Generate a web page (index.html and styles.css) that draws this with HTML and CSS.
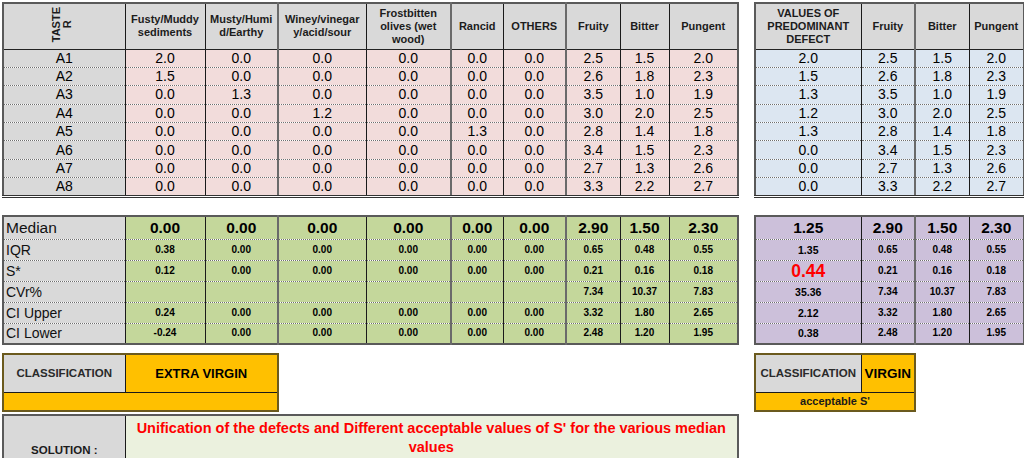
FILE: index.html
```html
<!DOCTYPE html>
<html>
<head>
<meta charset="utf-8">
<link rel="stylesheet" href="styles.css">
</head>
<body>
<div class="sheet">
  <div class="band band-top">
    <table class="tbl main">
      <colgroup>
        <col class="w122"><col class="w80"><col class="w73"><col class="w88"><col class="w85"><col class="w52"><col class="w63"><col class="w54"><col class="w49"><col class="w69">
      </colgroup>
      <thead>
        <tr class="hdr">
          <th class="taster"><span class="vert">TASTE<br>R</span></th>
          <th>Fusty/Muddy<br>sediments</th>
          <th>Musty/Humi<br>d/Earthy</th>
          <th class="thick">Winey/vinegar<br>y/acid/sour</th>
          <th>Frostbitten<br>olives (wet<br>wood)</th>
          <th class="thick">Rancid</th>
          <th>OTHERS</th>
          <th class="thick">Fruity</th>
          <th>Bitter</th>
          <th>Pungent</th>
        </tr>
      </thead>
      <tbody class="pink">
        <tr><td class="name">A1</td><td>2.0</td><td>0.0</td><td class="thick">0.0</td><td>0.0</td><td class="thick">0.0</td><td>0.0</td><td class="thick">2.5</td><td>1.5</td><td>2.0</td></tr>
        <tr><td class="name">A2</td><td>1.5</td><td>0.0</td><td class="thick">0.0</td><td>0.0</td><td class="thick">0.0</td><td>0.0</td><td class="thick">2.6</td><td>1.8</td><td>2.3</td></tr>
        <tr><td class="name">A3</td><td>0.0</td><td>1.3</td><td class="thick">0.0</td><td>0.0</td><td class="thick">0.0</td><td>0.0</td><td class="thick">3.5</td><td>1.0</td><td>1.9</td></tr>
        <tr><td class="name">A4</td><td>0.0</td><td>0.0</td><td class="thick">1.2</td><td>0.0</td><td class="thick">0.0</td><td>0.0</td><td class="thick">3.0</td><td>2.0</td><td>2.5</td></tr>
        <tr><td class="name">A5</td><td>0.0</td><td>0.0</td><td class="thick">0.0</td><td>0.0</td><td class="thick">1.3</td><td>0.0</td><td class="thick">2.8</td><td>1.4</td><td>1.8</td></tr>
        <tr><td class="name">A6</td><td>0.0</td><td>0.0</td><td class="thick">0.0</td><td>0.0</td><td class="thick">0.0</td><td>0.0</td><td class="thick">3.4</td><td>1.5</td><td>2.3</td></tr>
        <tr><td class="name">A7</td><td>0.0</td><td>0.0</td><td class="thick">0.0</td><td>0.0</td><td class="thick">0.0</td><td>0.0</td><td class="thick">2.7</td><td>1.3</td><td>2.6</td></tr>
        <tr><td class="name">A8</td><td>0.0</td><td>0.0</td><td class="thick">0.0</td><td>0.0</td><td class="thick">0.0</td><td>0.0</td><td class="thick">3.3</td><td>2.2</td><td>2.7</td></tr>
      </tbody>
    </table>

    <table class="tbl side">
      <colgroup><col class="w106"><col class="w54"><col class="w54"><col class="w55"></colgroup>
      <thead>
        <tr class="hdr">
          <th>VALUES OF<br>PREDOMINANT<br>DEFECT</th>
          <th>Fruity</th>
          <th class="thick">Bitter</th>
          <th>Pungent</th>
        </tr>
      </thead>
      <tbody class="blue">
        <tr><td>2.0</td><td>2.5</td><td class="thick">1.5</td><td>2.0</td></tr>
        <tr><td>1.5</td><td>2.6</td><td class="thick">1.8</td><td>2.3</td></tr>
        <tr><td>1.3</td><td>3.5</td><td class="thick">1.0</td><td>1.9</td></tr>
        <tr><td>1.2</td><td>3.0</td><td class="thick">2.0</td><td>2.5</td></tr>
        <tr><td>1.3</td><td>2.8</td><td class="thick">1.4</td><td>1.8</td></tr>
        <tr><td>0.0</td><td>3.4</td><td class="thick">1.5</td><td>2.3</td></tr>
        <tr><td>0.0</td><td>2.7</td><td class="thick">1.3</td><td>2.6</td></tr>
        <tr><td>0.0</td><td>3.3</td><td class="thick">2.2</td><td>2.7</td></tr>
      </tbody>
    </table>
  </div>

  <div class="band band-stats">
    <table class="tbl stats green">
      <colgroup>
        <col class="w122"><col class="w80"><col class="w73"><col class="w88"><col class="w85"><col class="w52"><col class="w63"><col class="w54"><col class="w49"><col class="w69">
      </colgroup>
      <tbody>
        <tr class="med"><td class="lbl">Median</td><td>0.00</td><td>0.00</td><td class="thick">0.00</td><td>0.00</td><td class="thick">0.00</td><td>0.00</td><td class="thick">2.90</td><td>1.50</td><td>2.30</td></tr>
        <tr><td class="lbl">IQR</td><td>0.38</td><td>0.00</td><td class="thick">0.00</td><td>0.00</td><td class="thick">0.00</td><td>0.00</td><td class="thick">0.65</td><td>0.48</td><td>0.55</td></tr>
        <tr><td class="lbl">S*</td><td>0.12</td><td>0.00</td><td class="thick">0.00</td><td>0.00</td><td class="thick">0.00</td><td>0.00</td><td class="thick">0.21</td><td>0.16</td><td>0.18</td></tr>
        <tr><td class="lbl">CVr%</td><td></td><td></td><td class="thick"></td><td></td><td class="thick"></td><td></td><td class="thick">7.34</td><td>10.37</td><td>7.83</td></tr>
        <tr><td class="lbl">CI Upper</td><td>0.24</td><td>0.00</td><td class="thick">0.00</td><td>0.00</td><td class="thick">0.00</td><td>0.00</td><td class="thick">3.32</td><td>1.80</td><td>2.65</td></tr>
        <tr><td class="lbl">CI Lower</td><td>-0.24</td><td>0.00</td><td class="thick">0.00</td><td>0.00</td><td class="thick">0.00</td><td>0.00</td><td class="thick">2.48</td><td>1.20</td><td>1.95</td></tr>
      </tbody>
    </table>

    <table class="tbl stats purple">
      <colgroup><col class="w106"><col class="w54"><col class="w54"><col class="w55"></colgroup>
      <tbody>
        <tr class="med"><td>1.25</td><td>2.90</td><td class="thick">1.50</td><td>2.30</td></tr>
        <tr><td class="first">1.35</td><td>0.65</td><td class="thick">0.48</td><td>0.55</td></tr>
        <tr><td class="alert">0.44</td><td>0.21</td><td class="thick">0.16</td><td>0.18</td></tr>
        <tr><td class="first">35.36</td><td>7.34</td><td class="thick">10.37</td><td>7.83</td></tr>
        <tr><td class="first">2.12</td><td>3.32</td><td class="thick">1.80</td><td>2.65</td></tr>
        <tr><td class="first">0.38</td><td>2.48</td><td class="thick">1.20</td><td>1.95</td></tr>
      </tbody>
    </table>
  </div>

  <div class="band band-class">
    <div class="leftstack">
      <table class="cls cls-l">
        <colgroup><col class="w122"><col class="w153"></colgroup>
        <tbody>
          <tr class="cls-row"><td class="cls-lbl">CLASSIFICATION</td><td class="cls-val">EXTRA VIRGIN</td></tr>
          <tr class="cls-sub"><td colspan="2"></td></tr>
        </tbody>
      </table>
      <table class="sol">
        <colgroup><col class="w122"><col class="w613"></colgroup>
        <tbody>
          <tr><td class="sol-lbl">SOLUTION :</td><td class="sol-txt">Unification of the defects and Different acceptable values of S' for the various median values</td></tr>
        </tbody>
      </table>
    </div>
    <table class="cls cls-r">
      <colgroup><col class="w106"><col class="w54"></colgroup>
      <tbody>
        <tr class="cls-row"><td class="cls-lbl">CLASSIFICATION</td><td class="cls-val">VIRGIN</td></tr>
        <tr class="cls-sub"><td colspan="2">acceptable S'</td></tr>
      </tbody>
    </table>
  </div>
</div>
</body>
</html>
```

FILE: styles.css
```css
html, body {
  margin: 0;
  padding: 0;
  background: #ffffff;
}

body {
  font-family: "Liberation Sans", Arial, sans-serif;
  color: #000;
}

.sheet {
  width: 1024px;
  height: 458px;
  padding: 2px 0 0 2px;
  box-sizing: border-box;
  overflow: hidden;
}

.band {
  display: flex;
  align-items: flex-start;
  gap: 15px;
}

.band-stats { margin-top: 17px; }
.band-class { margin-top: 8px; }

.w122 { width: 122px; }
.w80 { width: 80px; }
.w73 { width: 73px; }
.w88 { width: 88px; }
.w85 { width: 85px; }
.w52 { width: 52px; }
.w63 { width: 63px; }
.w54 { width: 54px; }
.w49 { width: 49px; }
.w69 { width: 69px; }
.w106 { width: 106px; }
.w55 { width: 55px; }
.w153 { width: 153px; }
.w613 { width: 613px; }

.tbl {
  border-collapse: collapse;
  table-layout: fixed;
  border: 2px solid #5a5a5a;
}

.main { width: 735px; border-bottom: 3px double #333; }
.side { width: 269px; border-bottom: 3px double #333; }
.stats.green { width: 735px; }
.stats.purple { width: 269px; }

.tbl th, .tbl td {
  padding: 0;
  text-align: center;
  border-left: 1px solid #1a1a1a;
  white-space: nowrap;
  overflow: hidden;
}

.tbl th:first-child, .tbl td:first-child { border-left: none; }

.tbl .thick { border-left: 2px solid #6a6a6a; }

.hdr { height: 46px; }

.hdr th {
  background: #d9d9d9;
  font-weight: bold;
  font-size: 11px;
  line-height: 13px;
  color: #1c1c1c;
  vertical-align: middle;
  border-bottom: 1px solid #222;
}

.vert {
  display: inline-block;
  writing-mode: vertical-rl;
  transform: rotate(180deg);
  text-align: center;
  line-height: 11px;
  margin-right: 4px;
}

.pink tr, .blue tr { height: 18.4px; }

.pink td, .blue td {
  font-size: 14px;
  line-height: 17px;
  border-bottom: 1px dotted #6e6e6e;
}

.pink tr:last-child td, .blue tr:last-child td { border-bottom: none; }

.pink td { background: #f2dcdb; }
.pink td.name { background: #d9d9d9; }
.blue td { background: #dce6f1; }

.stats tr { height: 21px; }
.stats tr.med { height: 23px; }

.stats td {
  font-size: 10px;
  font-weight: bold;
  line-height: 14px;
  border-bottom: 1px dotted #6e6e6e;
}

.stats tr:last-child td { border-bottom: none; }

.stats tr.med td {
  font-size: 15.5px;
  line-height: 18px;
}

.green td { background: #c4d79b; }
.purple td { background: #ccc0da; }

.stats td.lbl {
  background: #d9d9d9;
  text-align: left;
  padding-left: 2px;
  font-size: 14px;
  font-weight: normal;
  color: #111;
}

.purple td.first {
  font-size: 10.5px;
}

.purple td.alert {
  color: #ff0000;
  font-size: 17.5px;
  line-height: 18px;
}

.cls {
  border-collapse: collapse;
  table-layout: fixed;
  border: 2px solid #6b5a1e;
}

.cls-l { width: 275px; }
.cls-r { width: 160px; }

.cls td { padding: 0; white-space: nowrap; overflow: hidden; }

.cls-row { height: 38px; }
.cls-sub { height: 19px; }

.cls-lbl {
  background: #d9d9d9;
  font-weight: bold;
  font-size: 11.5px;
  color: #2a2a2a;
  text-align: center;
  border-right: 1px solid #1a1a1a;
  border-bottom: 1px solid #1a1a1a;
}

.cls-val {
  background: #ffc000;
  font-weight: bold;
  font-size: 13px;
  text-align: center;
  border-bottom: 1px solid #1a1a1a;
}

.cls-r .cls-val { font-size: 13.5px; }

.cls-sub td {
  background: #ffc000;
  font-weight: bold;
  font-size: 11px;
  text-align: center;
  color: #1a1a1a;
}

.leftstack {
  display: flex;
  flex-direction: column;
  gap: 2px;
}

.sol {
  width: 735px;
  border-collapse: collapse;
  table-layout: fixed;
  border: 2px solid #5a5a5a;
}

.sol tr { height: 44px; }

.sol td { padding: 0; }

.sol-lbl {
  background: #d9d9d9;
  font-weight: bold;
  font-size: 11.5px;
  line-height: 14px;
  color: #1c1c1c;
  text-align: center;
  vertical-align: bottom;
  padding-bottom: 1px !important;
  border-right: 1px solid #1a1a1a;
}

.sol-txt {
  background: #ebf1de;
  color: #ff0000;
  font-weight: bold;
  font-size: 14.5px;
  line-height: 19px;
  text-align: center;
  vertical-align: top;
  padding: 3px 6px 0 !important;
}
```
